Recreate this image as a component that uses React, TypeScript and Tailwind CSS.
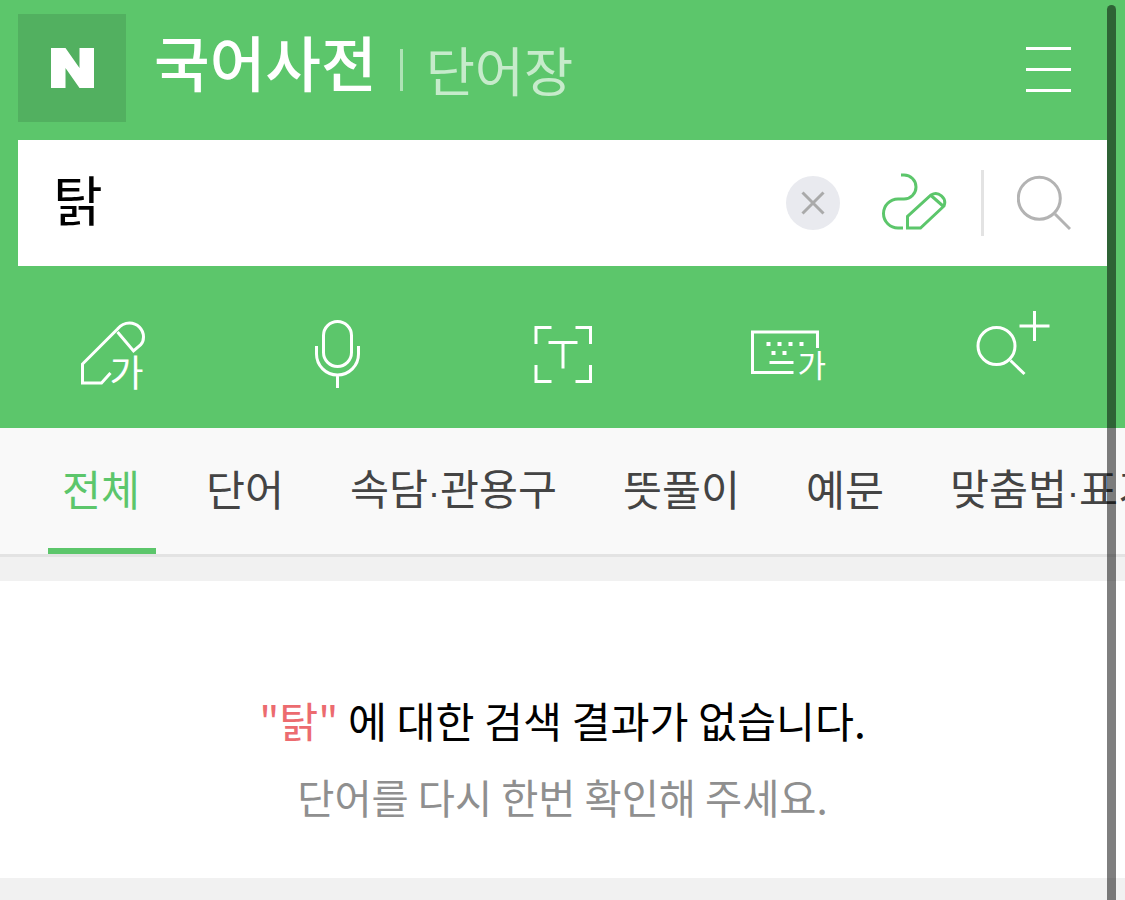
const tabs = [
  { name: "전체", active: true },
  { name: "단어" },
  { name: "속담·관용구" },
  { name: "뜻풀이" },
  { name: "예문" },
  { name: "맞춤법·표기법" },
];

function ToolIcon({ viewBox, children }: { viewBox: string; children: React.ReactNode }) {
  return (
    <svg
      viewBox={viewBox}
      className="w-[100px] h-[100px] text-white"
      fill="none"
      stroke="currentColor"
      strokeWidth={3}
    >
      {children}
    </svg>
  );
}

function IconGa({ x, y, size }: { x: number; y: number; size: number }) {
  return (
    <text x={x} y={y} fontSize={size} fill="currentColor" stroke="none">
      가
    </text>
  );
}

export default function App() {
  return (
    <div className="relative w-[1125px] h-[900px] overflow-hidden bg-[#f1f1f1] font-['Noto_Sans_CJK_KR','Noto_Sans',sans-serif]">
      {/* header */}
      <header className="bg-[#5cc66b]">
        <div className="h-[140px] flex items-start pl-[18px] pr-[54px] pt-[14px]">
          <div className="w-[108px] h-[108px] bg-[#52b060] flex items-center justify-center">
            <svg viewBox="51 48 43 40" className="w-[43px] h-[40px]">
              <path d="M51 48H65.5L79.5 68V48H94V88H79.5L65.5 68V88H51Z" fill="#fff" />
            </svg>
          </div>
          <div className="ml-[28px] h-[108px] flex items-center">
            <span className="text-[60.5px] leading-none font-medium text-white -mt-[14px]">국어사전</span>
            <span className="ml-[23px] w-[3px] h-[42px] bg-white/50 mt-[4px]" />
            <span className="ml-[23px] text-[53.5px] leading-none text-white/65 mt-[2px]">단어장</span>
          </div>
          <div className="ml-auto mt-[33px] flex flex-col gap-[18px]">
            <div className="w-[45px] h-[3px] bg-white" />
            <div className="w-[45px] h-[3px] bg-white" />
            <div className="w-[45px] h-[3px] bg-white" />
          </div>
        </div>

        {/* search box */}
        <div className="mx-[18px] h-[126px] bg-white flex items-center pl-[35px] pr-[36px]">
          <span className="text-[54px] leading-none text-black -mt-[8px]">탉</span>
          <div className="ml-auto w-[54px] h-[54px] rounded-full bg-[#e9eaef] flex items-center justify-center">
            <svg viewBox="0 0 24 24" className="w-[24px] h-[24px]" stroke="#aaaaaa" strokeWidth={3}>
              <path d="M1.5 1.5L22.5 22.5M22.5 1.5L1.5 22.5" />
            </svg>
          </div>
          <svg viewBox="882 173 66 60" className="ml-[42px] w-[66px] h-[60px]" fill="none" stroke="#5cc66b" strokeWidth={3}>
            <path d="M901 175h3a12 12 0 0 1 0 24h-6a14.5 14.5 0 0 0 0 29h5" />
            <path d="M907.5 216.5V228H920.5L944 206A9 9 0 0 0 931 195Z" />
            <path d="M931 195.5L943 206" />
          </svg>
          <div className="ml-[33px] w-[3px] h-[66px] bg-[#e3e3e3]" />
          <svg viewBox="1017 173 54 60" className="ml-[33px] w-[54px] h-[60px]" fill="none" stroke="#b3b3b3" strokeWidth={3}>
            <circle cx="1039.3" cy="198.3" r="21" />
            <path d="M1055 214L1070 229" />
          </svg>
        </div>

        {/* input tools */}
        <div className="h-[162px] grid grid-cols-5 items-center justify-items-center">
          <ToolIcon viewBox="62.5 297 100 100">
            <path d="M110 373L101 383H82V364L117 329Q122 323 129 323A14 14 0 0 1 143 337Q143 342 140 345L133 351L117 332" />
            <IconGa x={109} y={387} size={37} />
          </ToolIcon>
          <ToolIcon viewBox="287.5 297 100 100">
            <rect x="323" y="321.5" width="28" height="45" rx="14" />
            <path d="M316 346v8a21 21 0 0 0 42 0v-8M337 375V388" />
          </ToolIcon>
          <ToolIcon viewBox="512.5 297 100 100">
            <path d="M535.5 344V327.5H551M575 327.5H590V344M535.5 365V381.5H551M575 381.5H590V365" />
            <path d="M548 342.5H577M562.5 342.5V368.5" />
          </ToolIcon>
          <ToolIcon viewBox="737.5 297 100 100">
            <path d="M793 372.5H752V332H817V348" />
            <path d="M769 362.5H793" />
            <g fill="currentColor" stroke="none">
              <rect x="766" y="342" width="4" height="4" />
              <rect x="777" y="342" width="4" height="4" />
              <rect x="788" y="342" width="4" height="4" />
              <rect x="799" y="342" width="4" height="4" />
              <rect x="771" y="351" width="4" height="4" />
              <rect x="782" y="351" width="4" height="4" />
            </g>
            <IconGa x={797} y={377} size={31} />
          </ToolIcon>
          <ToolIcon viewBox="962.5 297 100 100">
            <circle cx="996" cy="346" r="18.5" />
            <path d="M1010 360.5L1024 374M1019 326H1049M1034 311V341" />
          </ToolIcon>
        </div>
      </header>

      {/* tabs */}
      <nav className="h-[129px] bg-[#f9f9f9] border-b-[3px] border-[#e3e3e3] flex pl-[48px] gap-[36px] overflow-hidden">
        {tabs.map((tab) => {
          const parts = tab.name.split("·");
          return (
            <div
              key={tab.name}
              className={`shrink-0 h-[126px] pl-[14px] pr-[16px] flex items-center border-b-[6px] ${
                tab.active ? "border-[#5cc66b] text-[#5cc66b]" : "border-transparent text-[#444444]"
              }`}
            >
              <span className="text-[42.4px] leading-none whitespace-nowrap">
                {parts[0]}
                {parts[1] && <span className="font-['Liberation_Sans'] text-[36px]">·</span>}
                {parts[1]}
              </span>
            </div>
          );
        })}
      </nav>

      {/* empty result */}
      <main className="mt-[24px] h-[297px] bg-white flex flex-col items-center pt-[114px]">
        <p className="text-[42.4px] leading-[50px] text-black">
          <span className="text-[#ec6b6f]">"탉"</span> 에 대한 검색 결과가 없습니다.
        </p>
        <p className="mt-[27px] text-[40.4px] leading-[50px] text-[#8f8f8f]">단어를 다시 한번 확인해 주세요.</p>
      </main>

      {/* scrollbar overlay */}
      <div className="absolute left-[1107px] top-[5px] w-[9px] h-[900px] rounded-t-full bg-black/50" />
    </div>
  );
}
